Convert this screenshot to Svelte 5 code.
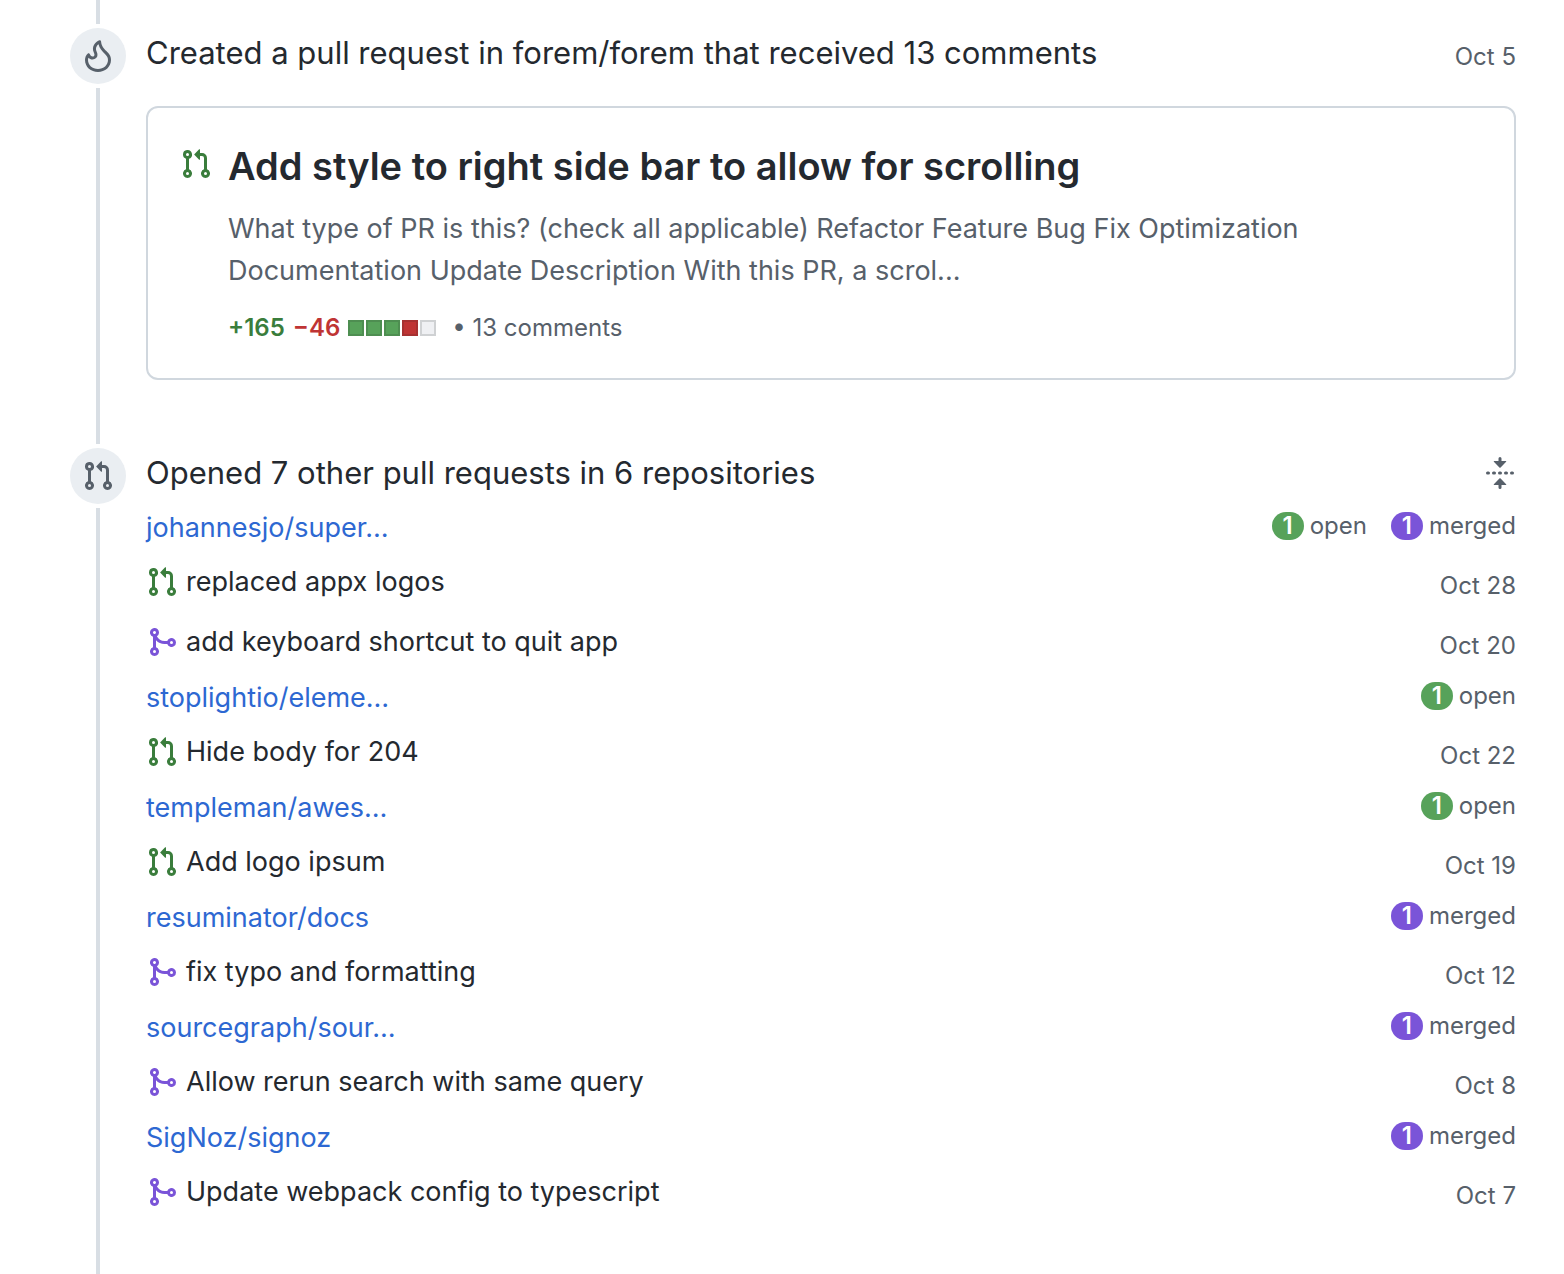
<script>
  const icons = {
    open: "M7.177 3.073L9.573.677A.25.25 0 0110 .854v4.792a.25.25 0 01-.427.177L7.177 3.427a.25.25 0 010-.354zM3.75 2.5a.75.75 0 100 1.5.75.75 0 000-1.5zm-2.25.75a2.25 2.25 0 113 2.122v5.256a2.251 2.251 0 11-1.5 0V5.372A2.25 2.25 0 011.5 3.25zM11 2.5h-1V4h1a1 1 0 011 1v5.628a2.251 2.251 0 101.5 0V5A2.5 2.5 0 0011 2.5zm1 10.25a.75.75 0 111.5 0 .75.75 0 01-1.5 0zM3.75 12a.75.75 0 100 1.5.75.75 0 000-1.5z",
    merged:
      "M5 3.254V3.25v.005a.75.75 0 110-.005v.004zm.45 1.9a2.25 2.25 0 10-1.95.218v5.256a2.25 2.25 0 101.5 0V7.123A5.735 5.735 0 009.25 9h1.378a2.251 2.251 0 100-1.5H9.25a4.25 4.25 0 01-3.8-2.346zM12.75 9a.75.75 0 100-1.5.75.75 0 000 1.5zm-8.5 4.5a.75.75 0 100-1.5.75.75 0 000 1.5z",
    flame:
      "M7.998 14.5c2.832 0 5-1.98 5-4.5 0-1.463-.68-2.19-1.879-3.383l-.036-.037c-1.013-1.008-2.3-2.29-2.834-4.434-.322.256-.63.579-.864.953-.432.696-.621 1.58-.046 2.73.473.947.67 2.284-.278 3.232-.61.61-1.545.84-2.403.633a2.788 2.788 0 01-1.436-.874A3.21 3.21 0 003 10c0 2.53 2.164 4.5 4.998 4.5zM9.533.753C9.496.34 9.16.009 8.77.146 7.035.75 4.34 3.187 5.997 6.5c.344.689.285 1.218.003 1.5-.419.419-1.54.487-2.04-.832-.173-.454-.659-.762-1.035-.454C2.036 7.44 1.5 8.702 1.5 10c0 3.512 2.998 6 6.498 6s6.5-2.5 6.5-6c0-2.137-1.128-3.26-2.312-4.438-1.19-1.184-2.436-2.425-2.653-4.81z",
    fold: "M10.896 2H8.75V.75a.75.75 0 00-1.5 0V2H5.104a.25.25 0 00-.177.427l2.896 2.896a.25.25 0 00.354 0l2.896-2.896A.25.25 0 0010.896 2zM8.75 15.25a.75.75 0 01-1.5 0V14H5.104a.25.25 0 01-.177-.427l2.896-2.896a.25.25 0 01.354 0l2.896 2.896a.25.25 0 01-.177.427H8.75v1.25zm-6.5-6.5a.75.75 0 000-1.5h-.5a.75.75 0 000 1.5h.5zM6 8a.75.75 0 01-.75.75h-.5a.75.75 0 010-1.5h.5A.75.75 0 016 8zm2.25.75a.75.75 0 000-1.5h-.5a.75.75 0 000 1.5h.5zM12 8a.75.75 0 01-.75.75h-.5a.75.75 0 010-1.5h.5A.75.75 0 0112 8zm2.25.75a.75.75 0 000-1.5h-.5a.75.75 0 000 1.5h.5z",
  };

  const blocks = ["added", "added", "added", "deleted", "neutral"];

  const repos = [
    {
      name: "johannesjo/super…",
      counts: ["open", "merged"],
      pulls: [
        { title: "replaced appx logos", state: "open", date: "Oct 28" },
        { title: "add keyboard shortcut to quit app", state: "merged", date: "Oct 20" },
      ],
    },
    {
      name: "stoplightio/eleme…",
      counts: ["open"],
      pulls: [{ title: "Hide body for 204", state: "open", date: "Oct 22" }],
    },
    {
      name: "templeman/awes…",
      counts: ["open"],
      pulls: [{ title: "Add logo ipsum", state: "open", date: "Oct 19" }],
    },
    {
      name: "resuminator/docs",
      counts: ["merged"],
      pulls: [{ title: "fix typo and formatting", state: "merged", date: "Oct 12" }],
    },
    {
      name: "sourcegraph/sour…",
      counts: ["merged"],
      pulls: [{ title: "Allow rerun search with same query", state: "merged", date: "Oct 8" }],
    },
    {
      name: "SigNoz/signoz",
      counts: ["merged"],
      pulls: [{ title: "Update webpack config to typescript", state: "merged", date: "Oct 7" }],
    },
  ];

  let expanded = true;

  const toggle = () => {
    expanded = !expanded;
  };
</script>

<main class="timeline">
  <section class="item">
    <div class="rail">
      <div class="badge">
        <svg class="icon" viewBox="0 0 16 16"><path d={icons.flame} /></svg>
      </div>
    </div>
    <div class="body">
      <header class="featured-header">
        <h4>Created a pull request in <a href="#forem">forem/forem</a> that received 13 comments</h4>
        <time class="date">Oct 5</time>
      </header>
      <article class="card">
        <svg class="icon open" viewBox="0 0 16 16"><path d={icons.open} /></svg>
        <div class="card-body">
          <h3><a href="#pull">Add style to right side bar to allow for scrolling</a></h3>
          <p>
            What type of PR is this? (check all applicable) Refactor Feature Bug Fix Optimization
            Documentation Update Description With this PR, a scrol...
          </p>
          <div class="stats">
            <strong class="additions">+165</strong>
            <strong class="deletions">−46</strong>
            <span class="diffstat">
              {#each blocks as block}
                <span class="block {block}"></span>
              {/each}
            </span>
            <span class="comments">• 13 comments</span>
          </div>
        </div>
      </article>
    </div>
  </section>

  <section class="item last">
    <div class="rail">
      <div class="badge">
        <svg class="icon" viewBox="0 0 16 16"><path d={icons.open} /></svg>
      </div>
    </div>
    <div class="body">
      <header>
        <h4>Opened 7 other pull requests in 6 repositories</h4>
        <button on:click={toggle} aria-label="Collapse" aria-expanded={expanded}>
          <svg class="icon" viewBox="0 0 16 16"><path d={icons.fold} /></svg>
        </button>
      </header>
      {#if expanded}
        {#each repos as repo}
          <div class="repo">
            <a href="#{repo.name}">{repo.name}</a>
            <div class="counts">
              {#each repo.counts as state}
                <span class="count"><span class="counter {state}">1</span>{state}</span>
              {/each}
            </div>
          </div>
          <ul>
            {#each repo.pulls as pull}
              <li>
                <svg class="icon {pull.state}" viewBox="0 0 16 16"><path d={icons[pull.state]} /></svg>
                <a href="#{pull.title}">{pull.title}</a>
                <time class="date">{pull.date}</time>
              </li>
            {/each}
          </ul>
        {/each}
      {/if}
    </div>
  </section>
</main>

<style>
  :global(body) {
    margin: 0;
    background: #fff;
  }

  .timeline {
    display: flex;
    flex-direction: column;
    box-sizing: border-box;
    min-height: 100vh;
    padding: 0 48px 0 70px;
    color: #24292f;
    font-family: Inter, "Liberation Sans", sans-serif;
    font-size: 27px;
    line-height: 42px;
  }

  .item {
    display: flex;
    gap: 20px;
  }

  .last {
    flex: 1;
  }

  .rail {
    display: flex;
    flex-direction: column;
    align-items: center;
    gap: 4px;
  }

  .rail::before,
  .rail::after {
    content: "";
    width: 4px;
    background: #d8dee4;
  }

  .rail::before {
    height: 24px;
  }

  .rail::after {
    flex: 1;
  }

  .badge {
    display: flex;
    align-items: center;
    justify-content: center;
    width: 56px;
    height: 56px;
    border-radius: 50%;
    background: #eaeef2;
    color: #57606a;
  }

  .icon {
    display: block;
    flex: none;
    width: 32px;
    height: 32px;
    fill: currentColor;
    fill-rule: evenodd;
  }

  .icon.open {
    color: #3a7d3c;
  }

  .icon.merged {
    color: #7a54d8;
  }

  .body {
    flex: 1;
    min-width: 0;
    padding: 28px 0 40px;
  }

  header {
    display: flex;
    justify-content: space-between;
    margin-bottom: 4px;
  }

  .featured-header {
    margin-bottom: 28px;
  }

  h3,
  h4,
  p,
  ul {
    margin: 0;
    padding: 0;
  }

  h4 {
    font-size: 31px;
    font-weight: 400;
    line-height: 50px;
  }

  a {
    color: inherit;
    text-decoration: none;
  }

  a:hover {
    color: #2d68d2;
    text-decoration: underline;
  }

  .date {
    margin-left: auto;
    padding-top: 8px;
    color: #57606a;
    font-size: 24px;
    white-space: nowrap;
  }

  .card {
    display: flex;
    gap: 16px;
    padding: 32px;
    border: 2px solid #d0d7de;
    border-radius: 12px;
  }

  .card .icon {
    margin-top: 8px;
  }

  h3 {
    font-size: 38px;
    font-weight: 600;
    line-height: 52px;
  }

  p {
    margin: 16px 0 18px;
    color: #57606a;
  }

  .stats {
    display: flex;
    align-items: center;
    gap: 8px;
    color: #57606a;
    font-size: 24px;
    line-height: 36px;
  }

  .stats strong {
    font-weight: 600;
  }

  .additions {
    color: #3a7d3c;
  }

  .deletions {
    color: #bf3434;
  }

  .diffstat {
    display: flex;
    gap: 2px;
  }

  .block {
    box-sizing: border-box;
    width: 16px;
    height: 16px;
    border: 2px solid rgba(27, 31, 36, 0.15);
  }

  .block.added {
    background: #57a25a;
  }

  .block.deleted {
    background: #bf3434;
  }

  .block.neutral {
    background: #eff0f3;
  }

  .comments {
    margin-left: 8px;
  }

  button {
    align-self: center;
    padding: 0;
    border: 0;
    background: none;
    color: #57606a;
    cursor: pointer;
  }

  .repo {
    display: flex;
    align-items: flex-start;
    justify-content: space-between;
    box-sizing: border-box;
    height: 50px;
    padding-top: 4px;
    line-height: 44px;
  }

  .repo a {
    color: #2d68d2;
  }

  .counts {
    display: flex;
    gap: 24px;
    color: #57606a;
    font-size: 24px;
    line-height: 40px;
  }

  .count {
    display: flex;
    align-items: center;
    gap: 6px;
  }

  .counter {
    width: 32px;
    border-radius: 14px;
    color: #fff;
    font-weight: 600;
    line-height: 28px;
    text-align: center;
  }

  .counter.open {
    background: #57a25a;
  }

  .counter.merged {
    background: #7a54d8;
  }

  ul {
    list-style: none;
  }

  li {
    display: flex;
    align-items: center;
    gap: 8px;
    height: 60px;
  }
</style>
